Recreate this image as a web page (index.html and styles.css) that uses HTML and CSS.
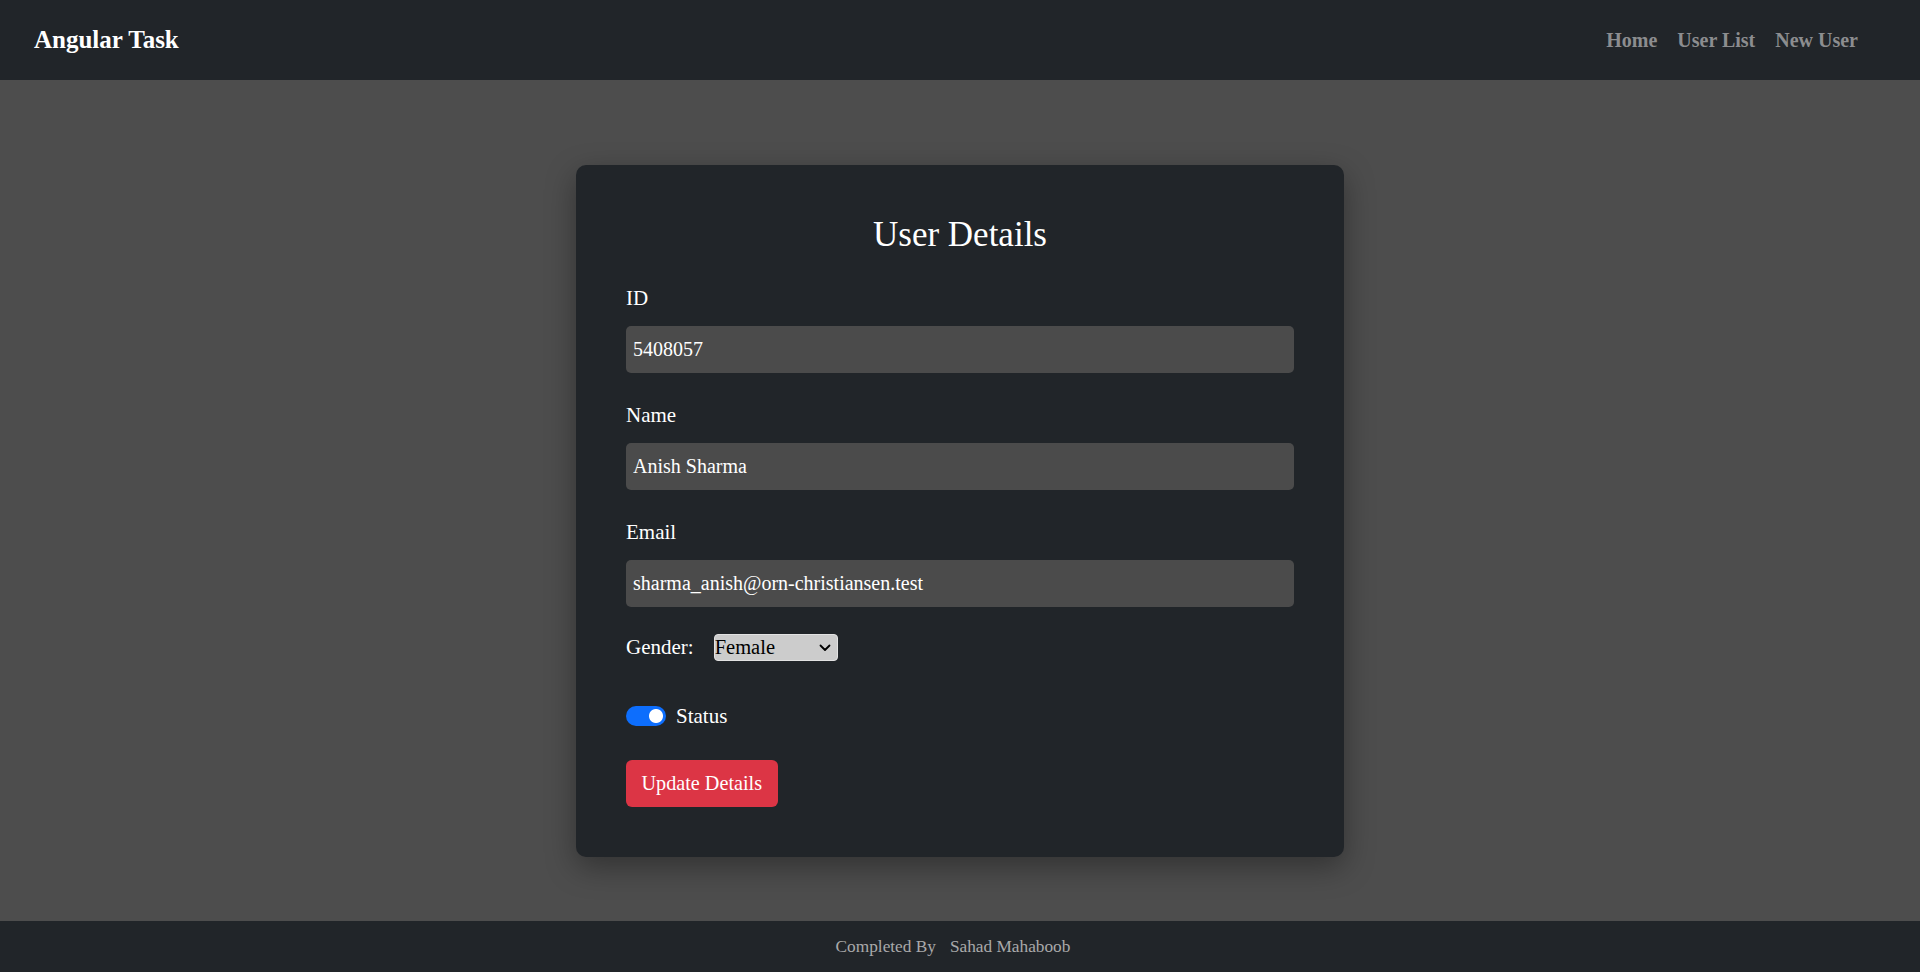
FILE: index.html
```html
<!DOCTYPE html>
<html lang="en">
<head>
<meta charset="utf-8">
<title>Angular Task</title>
<link rel="stylesheet" href="styles.css">
</head>
<body class="page">
  <header class="navbar">
    <a class="brand" href="#">Angular Task</a>
    <nav class="nav">
      <a class="nav-link" href="#">Home</a>
      <a class="nav-link" href="#">User List</a>
      <a class="nav-link" href="#">New User</a>
    </nav>
  </header>
  <main class="main">
    <section class="card">
      <h2 class="card-title">User Details</h2>
      <div class="field">
        <label class="field-label">ID</label>
        <input class="field-input" type="text" value="5408057">
      </div>
      <div class="field">
        <label class="field-label">Name</label>
        <input class="field-input" type="text" value="Anish Sharma">
      </div>
      <div class="field">
        <label class="field-label">Email</label>
        <input class="field-input" type="text" value="sharma_anish@orn-christiansen.test">
      </div>
      <div class="gender-row">
        <label class="gender-label">Gender:</label>
        <div class="select-wrap">
          <select class="gender-select">
            <option>Female</option>
            <option>Male</option>
          </select>
          <svg class="chevron" width="12" height="8" viewBox="0 0 12 8"><path d="M1.5 1.5 L6 6 L10.5 1.5" fill="none" stroke="#000" stroke-width="1.8" stroke-linecap="round" stroke-linejoin="round"/></svg>
        </div>
      </div>
      <div class="status-row">
        <input class="switch" type="checkbox" checked>
        <label class="status-label">Status</label>
      </div>
      <button class="btn-update" type="button">Update Details</button>
    </section>
  </main>
  <footer class="footer">
    <span class="footer-text">Completed By</span>
    <span class="footer-name">Sahad Mahaboob</span>
  </footer>
</body>
</html>
```

FILE: styles.css
```css
html, body {
  margin: 0;
  padding: 0;
}

.page {
  min-height: 100vh;
  display: flex;
  flex-direction: column;
  background: #4d4d4d;
  font-family: "Liberation Serif", "Times New Roman", serif;
  color: #fff;
}

.navbar {
  height: 80px;
  flex: 0 0 80px;
  background: #212529;
  display: flex;
  align-items: center;
  justify-content: space-between;
  padding: 0 52px 0 34px;
  box-sizing: border-box;
}

.brand {
  font-size: 25px;
  font-weight: bold;
  color: #fff;
  text-decoration: none;
}

.nav {
  display: flex;
}

.nav-link {
  font-size: 20px;
  font-weight: bold;
  color: #8c8d8f;
  text-decoration: none;
  padding: 0 10px;
}

.main {
  flex: 1;
  display: flex;
  justify-content: center;
  align-items: flex-start;
}

.card {
  width: 768px;
  box-sizing: border-box;
  margin-top: 85px;
  padding: 49px 50px 50px;
  background: #212529;
  border-radius: 10px;
  box-shadow: 0 10px 30px rgba(0, 0, 0, 0.35);
}

.card-title {
  margin: 0 0 27px;
  font-size: 35px;
  line-height: 42px;
  font-weight: normal;
  text-align: center;
  color: #fff;
}

.field {
  margin-bottom: 27px;
}

.field-label {
  display: block;
  font-size: 21px;
  line-height: 30px;
  margin-bottom: 13px;
}

.field-input {
  display: block;
  width: 100%;
  height: 47px;
  box-sizing: border-box;
  padding: 0 7px;
  border: none;
  border-radius: 5px;
  background: #4b4b4b;
  color: #fff;
  font-family: inherit;
  font-size: 20px;
  outline: none;
}

.gender-row {
  display: flex;
  align-items: center;
  height: 27px;
}

.gender-label {
  font-size: 21px;
  margin-right: 20px;
}

.select-wrap {
  position: relative;
  display: flex;
}

.gender-select {
  appearance: none;
  -webkit-appearance: none;
  width: 124px;
  height: 27px;
  box-sizing: border-box;
  padding: 0;
  border: 1px solid #e2e2e2;
  border-radius: 4px;
  background: #cccccc;
  color: #000;
  font-family: inherit;
  font-size: 20.5px;
  line-height: 25px;
}

.chevron {
  position: absolute;
  right: 7px;
  top: 10px;
  pointer-events: none;
}

.status-row {
  display: flex;
  align-items: center;
  height: 30px;
  margin-top: 40px;
}

.switch {
  appearance: none;
  -webkit-appearance: none;
  margin: 0 10px 0 0;
  width: 40px;
  height: 20px;
  border-radius: 10px;
  background: radial-gradient(circle at 30px 10px, #fff 6.5px, transparent 7.5px), #0d6efd;
}

.status-label {
  font-size: 21px;
  line-height: 30px;
}

.btn-update {
  display: block;
  margin-top: 29px;
  height: 47px;
  padding: 0 15.5px;
  border: none;
  border-radius: 6px;
  background: #dc3545;
  color: #fff;
  font-family: inherit;
  font-size: 20.2px;
}

.footer {
  flex: 0 0 51px;
  height: 51px;
  background: #212529;
  display: flex;
  align-items: center;
  justify-content: center;
  padding-right: 14px;
  font-size: 17.3px;
  color: #a9a9aa;
}

.footer-name {
  margin-left: 14px;
}
```
